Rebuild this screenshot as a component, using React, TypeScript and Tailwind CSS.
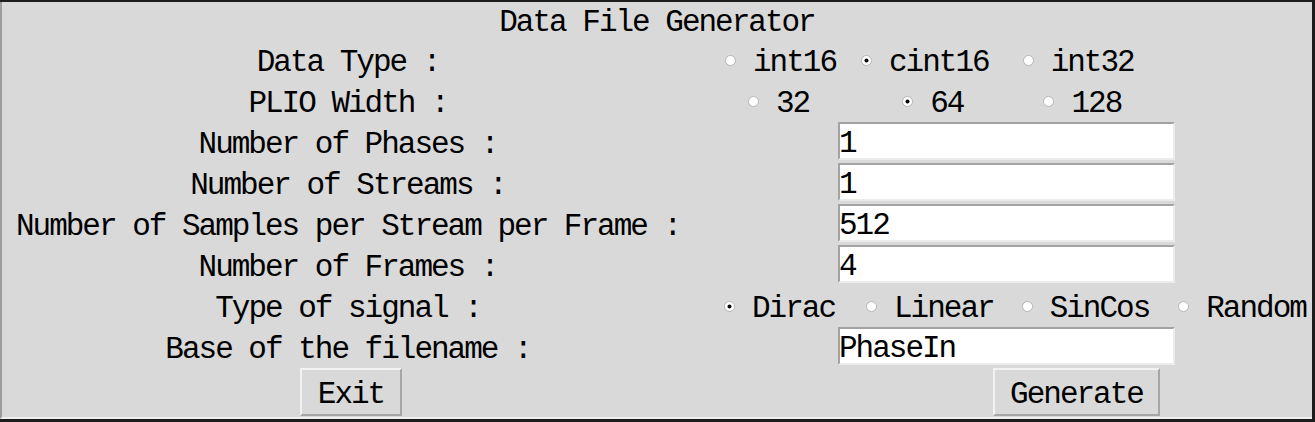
import React from "react";

type RadioItem = { label: string; checked?: boolean; gap?: number };

const font = "font-['Liberation_Mono',monospace] text-[31px] tracking-[-2px] text-black";

function Indicator({ checked }: { checked?: boolean }) {
  return (
    <svg width="11" height="11" viewBox="0 0 11 11" className="shrink-0">
      <circle cx="5.5" cy="5.5" r="5" fill="#ffffff" stroke="#b4b4b4" strokeWidth="1" />
      {checked && <circle cx="5.5" cy="5.5" r="2" fill="#000000" />}
    </svg>
  );
}

function RadioGroup({ items, offset }: { items: RadioItem[]; offset: string }) {
  return (
    <div className={`flex items-center h-full ${offset}`}>
      {items.map((it) => (
        <div key={it.label} className="flex items-center" style={{ marginLeft: it.gap ?? 0 }}>
          <Indicator checked={it.checked} />
          <span className="ml-[17px] pt-[4px] leading-none">{it.label}</span>
        </div>
      ))}
    </div>
  );
}

function Entry({ value }: { value: string }) {
  return (
    <div className="ml-[144px] w-[337px] h-[38px] bg-white border-2 border-t-[#a3a3a3] border-l-[#a3a3a3] border-b-[#ececec] border-r-[#ececec] flex items-center">
      <span className="pt-[4px] leading-none -ml-[1px]">{value}</span>
    </div>
  );
}

function Row({ label, children }: { label: string; children: React.ReactNode }) {
  return (
    <div className="grid grid-cols-[692px_1fr] h-[41px]">
      <div className="flex items-center justify-center">
        <span className="pt-[4px] leading-none">{label}</span>
      </div>
      <div>{children}</div>
    </div>
  );
}

function TkButton({ label, className }: { label: string; className: string }) {
  return (
    <div className={`h-[48px] bg-[#d9d9d9] border-2 border-t-[#f2f2f2] border-l-[#f2f2f2] border-b-[#a6a6a6] border-r-[#a6a6a6] flex items-center justify-center ${className}`}>
      <span className="pt-[4px] leading-none">{label}</span>
    </div>
  );
}

export default function App() {
  return (
    <div className="w-[1315px] h-[422px] bg-[#1c1c1c] pt-[2px] pr-[3px] pb-[3px]">
      <div className={`h-full bg-[#d9d9d9] border-l-2 border-l-[#9c9c9c] border-b-2 border-b-[#efefef] flex flex-col ${font}`}>
        <div className="h-[38px] flex items-center justify-center">
          <span className="pt-[2px] leading-none">Data File Generator</span>
        </div>
        <Row label="Data Type :">
          <RadioGroup
            offset="pl-[31px]"
            items={[
              { label: "int16" },
              { label: "cint16", checked: true, gap: 25 },
              { label: "int32", gap: 34 },
            ]}
          />
        </Row>
        <Row label="PLIO Width :">
          <RadioGroup
            offset="pl-[54px]"
            items={[
              { label: "32" },
              { label: "64", checked: true, gap: 93 },
              { label: "128", gap: 80 },
            ]}
          />
        </Row>
        <Row label="Number of Phases :">
          <Entry value="1" />
        </Row>
        <Row label="Number of Streams :">
          <Entry value="1" />
        </Row>
        <Row label="Number of Samples per Stream per Frame :">
          <Entry value="512" />
        </Row>
        <Row label="Number of Frames :">
          <Entry value="4" />
        </Row>
        <Row label="Type of signal :">
          <RadioGroup
            offset="pl-[30px]"
            items={[
              { label: "Dirac", checked: true },
              { label: "Linear", gap: 31 },
              { label: "SinCos", gap: 28 },
              { label: "Random", gap: 29 },
            ]}
          />
        </Row>
        <Row label="Base of the filename :">
          <Entry value="PhaseIn" />
        </Row>
        <div className="grid grid-cols-[692px_1fr] flex-1">
          <div>
            <TkButton label="Exit" className="ml-[298px] w-[102px]" />
          </div>
          <div>
            <TkButton label="Generate" className="ml-[299px] w-[167px]" />
          </div>
        </div>
      </div>
    </div>
  );
}
